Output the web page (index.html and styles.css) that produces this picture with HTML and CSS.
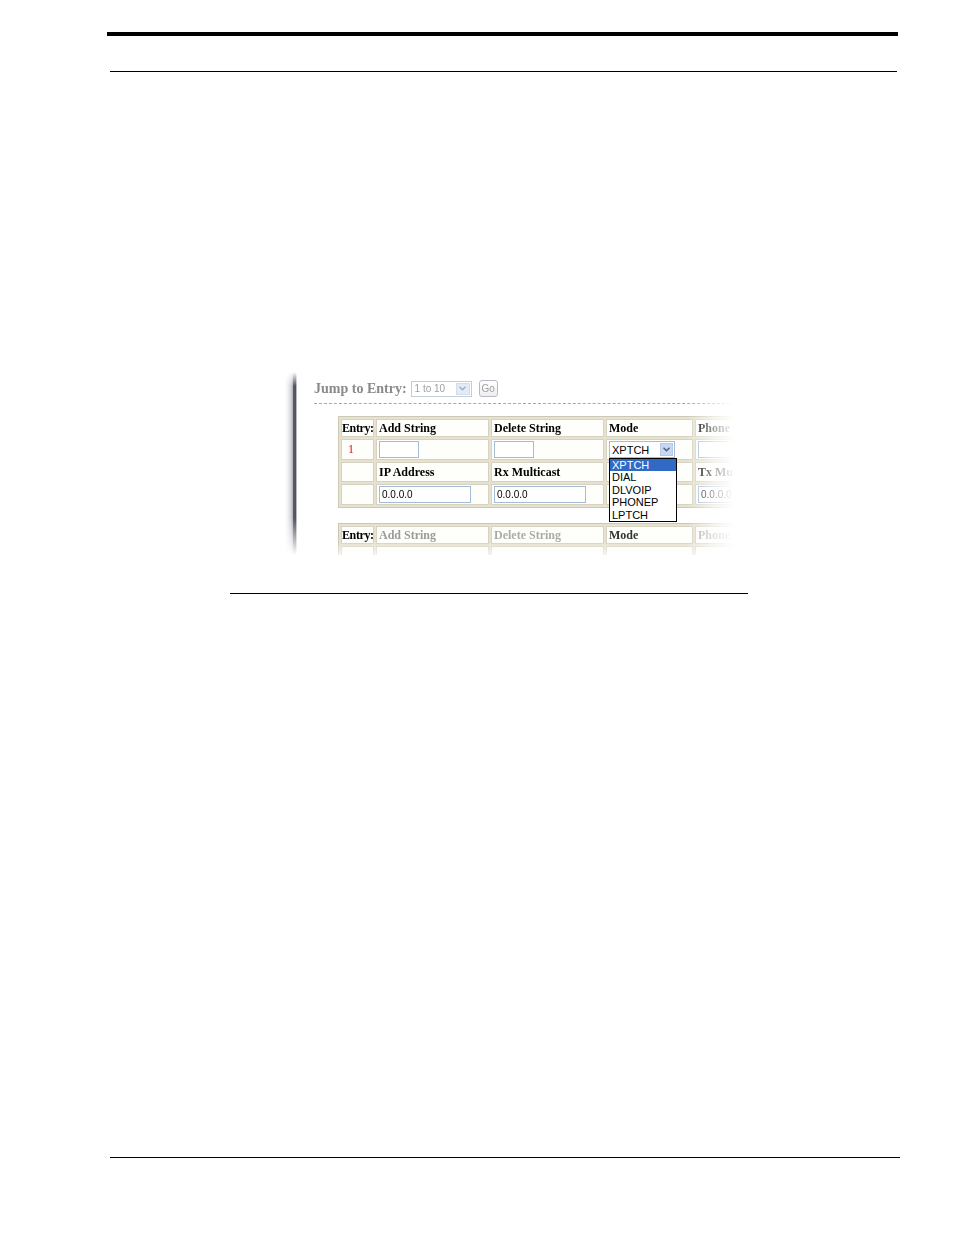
FILE: index.html
```html
<!DOCTYPE html>
<html>
<head>
<meta charset="utf-8">
<link rel="stylesheet" href="styles.css">
</head>
<body>
<div class="page">
  <div class="rule-thick"></div>
  <div class="rule-thin"></div>

  <div class="figure">
    <div class="edge"></div>
    <div class="content">
      <div class="inner">
        <div class="jump">
          <span class="jump-label">Jump to Entry:</span>
          <div class="jump-select">
            <span class="jump-value">1 to 10</span>
            <span class="jump-arrow"><svg width="7" height="5" viewBox="0 0 7 5"><path d="M0.5 0.8 L3.5 3.8 L6.5 0.8" fill="none" stroke="#9aaecb" stroke-width="1.4"/></svg></span>
          </div>
          <div class="go-btn">Go</div>
        </div>
        <div class="dashed"></div>

        <table class="grid">
          <tr class="r-head">
            <td class="c1 hd">Entry:</td>
            <td class="c2 hd">Add String</td>
            <td class="c3 hd">Delete String</td>
            <td class="c4 hd">Mode</td>
            <td class="c5 hd">Phone</td>
          </tr>
          <tr class="r-in">
            <td class="c1"><span class="num">1</span></td>
            <td class="c2"><div class="inp short"></div></td>
            <td class="c3"><div class="inp short"></div></td>
            <td class="c4">
              <div class="mode-sel">
                <span class="mode-val">XPTCH</span>
                <span class="mode-arrow"><svg width="7" height="5" viewBox="0 0 7 5"><path d="M0.5 0.8 L3.5 3.8 L6.5 0.8" fill="none" stroke="#4d6185" stroke-width="1.5"/></svg></span>
                <ul class="mode-list">
                  <li class="sel">XPTCH</li>
                  <li>DIAL</li>
                  <li>DLVOIP</li>
                  <li>PHONEP</li>
                  <li>LPTCH</li>
                </ul>
              </div>
            </td>
            <td class="c5"><div class="inp short"></div></td>
          </tr>
          <tr class="r-head2">
            <td class="c1"></td>
            <td class="c2 hd">IP Address</td>
            <td class="c3 hd">Rx Multicast</td>
            <td class="c4"></td>
            <td class="c5 hd">Tx Mu</td>
          </tr>
          <tr class="r-in2">
            <td class="c1"></td>
            <td class="c2"><div class="inp long">0.0.0.0</div></td>
            <td class="c3"><div class="inp long">0.0.0.0</div></td>
            <td class="c4"></td>
            <td class="c5"><div class="inp long">0.0.0.0</div></td>
          </tr>
        </table>

        <table class="grid second">
          <tr class="r-head">
            <td class="c1 hd">Entry:</td>
            <td class="c2 hd g1">Add String</td>
            <td class="c3 hd g2">Delete String</td>
            <td class="c4 hd g0">Mode</td>
            <td class="c5 hd g3">Phone</td>
          </tr>
          <tr class="r-in">
            <td class="c1"></td>
            <td class="c2"></td>
            <td class="c3"></td>
            <td class="c4"></td>
            <td class="c5"></td>
          </tr>
        </table>
      </div>
    </div>
  </div>

  <div class="caption-rule"></div>
  <div class="footer-rule"></div>
</div>
</body>
</html>
```

FILE: styles.css
```css
html, body {
  margin: 0;
  padding: 0;
  background: #ffffff;
}

.page {
  padding-top: 32px;
  width: 954px;
  height: 1235px;
  box-sizing: border-box;
}

.rule-thick {
  margin-left: 107px;
  width: 791px;
  height: 4px;
  background: #000;
}

.rule-thin {
  margin-top: 35px;
  margin-left: 110px;
  width: 787px;
  height: 1px;
  background: #000;
}

.figure {
  margin-top: 300px;
  margin-left: 285px;
  width: 450px;
  height: 183px;
  display: flex;
  overflow: hidden;
}

.edge {
  flex: 0 0 12px;
  background: linear-gradient(to right,
    #ffffff 0px,
    #efeff2 3px,
    #d4d5da 6px,
    #a9abb3 8px,
    #5a5c68 8.5px,
    #50525c 10.5px,
    #9c9da3 11.2px,
    #e6e6e8 12px);
  -webkit-mask-image: linear-gradient(to bottom, transparent 0, #000 14px, #000 80%, transparent 100%);
  mask-image: linear-gradient(to bottom, transparent 0, #000 14px, #000 80%, transparent 100%);
}

.content {
  flex: 1;
  padding-left: 17px;
  overflow: hidden;
  -webkit-mask-image: linear-gradient(to right, #000 calc(100% - 48px), rgba(0,0,0,0.35) calc(100% - 20px), transparent 100%);
  mask-image: linear-gradient(to right, #000 calc(100% - 48px), rgba(0,0,0,0.35) calc(100% - 20px), transparent 100%);
}

.inner {
  height: 183px;
  -webkit-mask-image: linear-gradient(to bottom, #000 calc(100% - 20px), transparent 100%);
  mask-image: linear-gradient(to bottom, #000 calc(100% - 20px), transparent 100%);
}

.jump {
  margin-top: 7px;
  height: 19px;
  display: flex;
  align-items: center;
}

.jump-label {
  font-family: "Liberation Serif", serif;
  font-weight: bold;
  font-size: 14px;
  color: #8a8a8a;
  white-space: nowrap;
}

.jump-select {
  margin-left: 4px;
  width: 61px;
  height: 16px;
  box-sizing: border-box;
  border: 1px solid #c3ccd8;
  display: flex;
  align-items: center;
  justify-content: space-between;
  padding-left: 3px;
  padding-right: 1px;
}

.jump-value {
  font-family: "Liberation Sans", sans-serif;
  font-size: 10px;
  color: #a0a0a0;
}

.jump-arrow {
  width: 14px;
  height: 12px;
  box-sizing: border-box;
  background: #e3ebf7;
  border: 1px solid #d2ddee;
  display: flex;
  align-items: center;
  justify-content: center;
}

.go-btn {
  margin-left: 7px;
  width: 19px;
  height: 17px;
  box-sizing: border-box;
  border: 1px solid #b5bac4;
  border-radius: 3px;
  background: linear-gradient(#ffffff, #eeeef0);
  font-family: "Liberation Sans", sans-serif;
  font-size: 10px;
  color: #a0a0a0;
  display: flex;
  align-items: center;
  justify-content: center;
}

.dashed {
  margin-top: 5px;
  height: 0;
  border-top: 1px dashed #a8a8a8;
}

.grid {
  margin-left: 24px;
  margin-top: 12px;
  border-collapse: separate;
  border-spacing: 2px;
  border: 1px solid #cdc8b4;
  background: #e6e2d2;
  table-layout: fixed;
  width: 440px;
}

.grid td {
  box-sizing: border-box;
  background: #fefefb;
  border: 1px solid #d8d3c1;
  padding: 0 0 0 1px;
  vertical-align: middle;
  font-family: "Liberation Serif", serif;
  font-size: 12px;
  color: #000;
  white-space: nowrap;
  overflow: visible;
}

.grid .c1 { width: 33px; padding-left: 0; letter-spacing: -0.4px; }
.grid .c2 { width: 113px; padding-left: 2px; }
.grid .c3 { width: 113px; padding-left: 2px; }
.grid .c4 { width: 87px; padding-left: 2px; }
.grid .c5 { width: 80px; padding-left: 2px; }

.grid .hd {
  font-weight: bold;
}

.r-head td { height: 18px; }
.r-in td { height: 21px; }
.r-head2 td { height: 20px; }
.r-in2 td { height: 21px; }

.num {
  display: block;
  padding-left: 6px;
  color: #e01010;
}

.inp {
  height: 17px;
  box-sizing: border-box;
  border: 1px solid #a6bcd6;
  background: #fff;
  font-family: "Liberation Sans", sans-serif;
  font-size: 10px;
  line-height: 15px;
  padding-left: 2px;
  color: #000;
}

.inp.short { width: 40px; }
.inp.long { width: 92px; }

.mode-sel {
  position: relative;
  width: 66px;
  height: 17px;
  box-sizing: border-box;
  border: 1px solid #a6bcd6;
  background: #fff;
  display: flex;
  align-items: center;
  justify-content: space-between;
  padding-left: 2px;
  padding-right: 1px;
}

.mode-val {
  font-family: "Liberation Sans", sans-serif;
  font-size: 11px;
  color: #000;
}

.mode-arrow {
  width: 13px;
  height: 13px;
  box-sizing: border-box;
  background: #c8d7f2;
  border: 1px solid #b6c9ec;
  display: flex;
  align-items: center;
  justify-content: center;
}

.mode-list {
  position: absolute;
  left: -1px;
  top: 16px;
  width: 66px;
  margin: 0;
  padding: 0;
  list-style: none;
  border: 1px solid #000;
  background: #fff;
  z-index: 2;
}

.mode-list li {
  height: 12.4px;
  line-height: 12.4px;
  padding-left: 2px;
  font-family: "Liberation Sans", sans-serif;
  font-size: 11px;
  color: #000;
}

.mode-list li.sel {
  background: #316ac5;
  color: #fff;
}

.second {
  margin-top: 15px;
}

.second .g1 { color: #9a9a9a; }
.second .g2 { color: #ababab; }
.second .g0 { color: #333; }
.second .g3 { color: #b0b0b0; }

.caption-rule {
  margin-top: 38px;
  margin-left: 230px;
  width: 518px;
  height: 1px;
  background: #000;
}

.footer-rule {
  margin-top: 563px;
  margin-left: 110px;
  width: 790px;
  height: 1px;
  background: #000;
}
```
